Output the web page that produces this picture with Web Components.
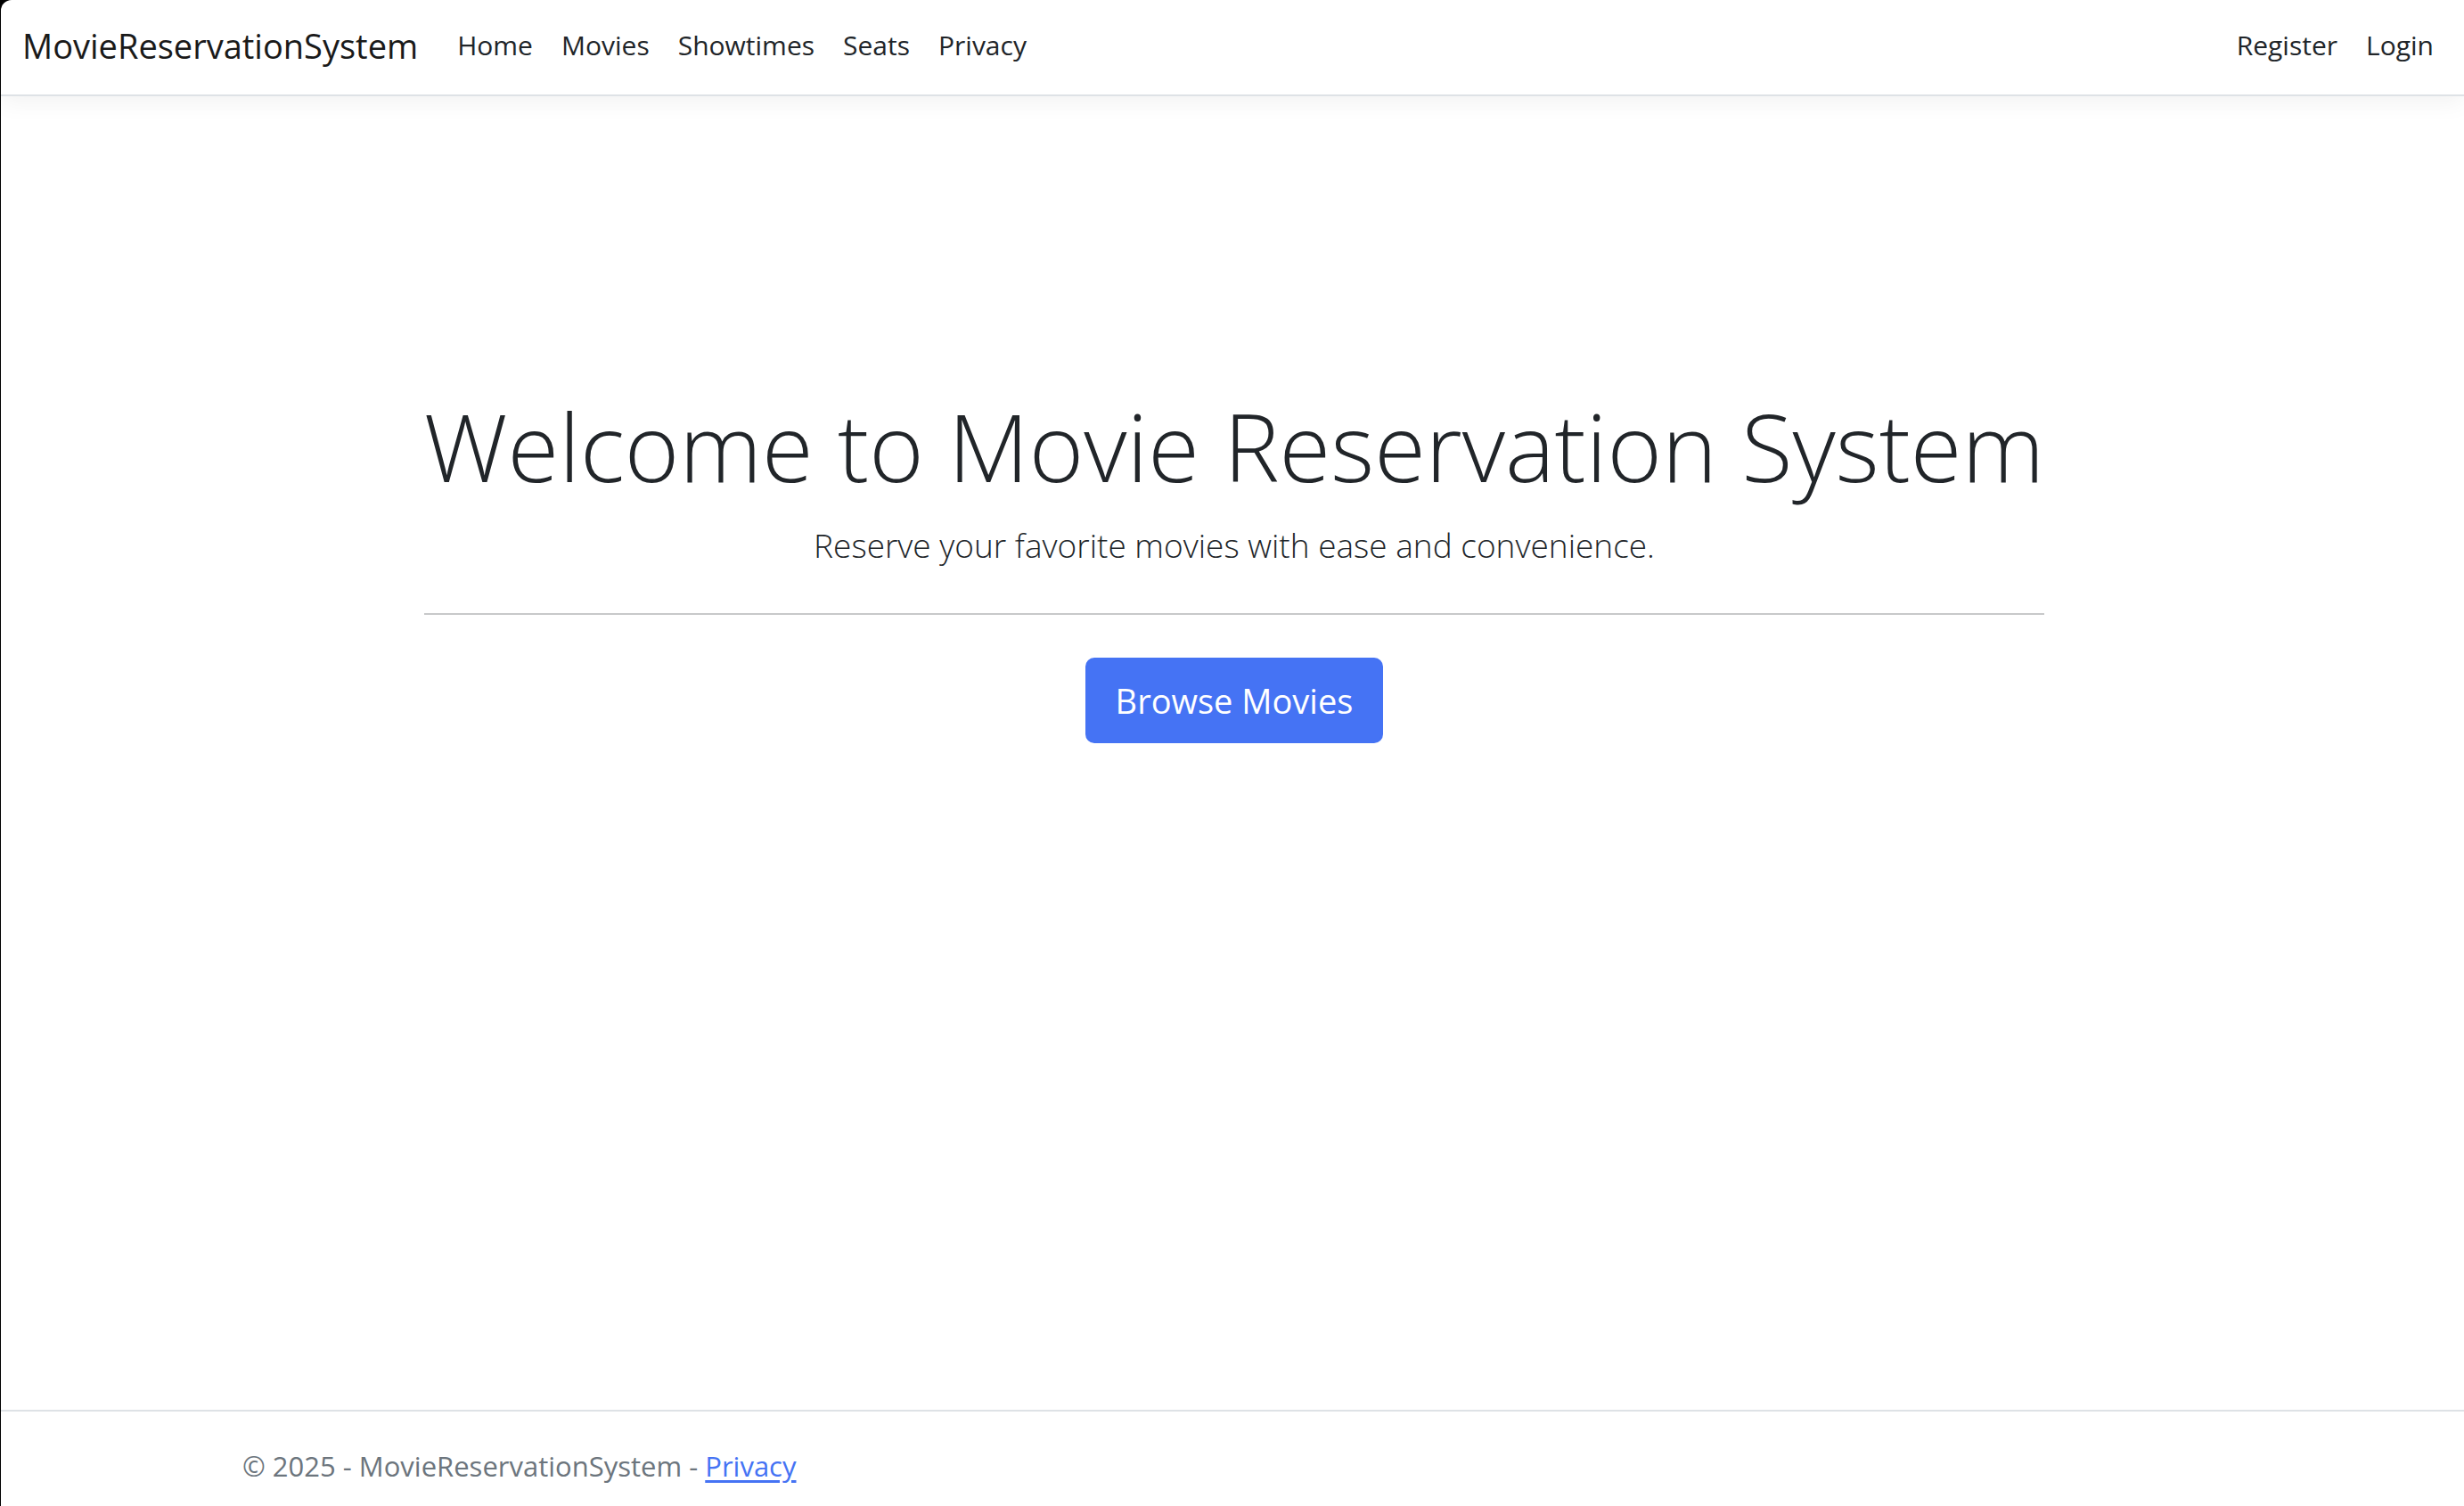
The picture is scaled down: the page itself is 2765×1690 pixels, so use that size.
<!DOCTYPE html>
<html lang="en">
<head>
<meta charset="utf-8">
<title>Home Page - MovieReservationSystem</title>
<style>
  html, body { margin: 0; height: 100%; }
  body {
    background: #000;
    color: #212529;
    font: 400 31px/48px "Segoe UI", "Open Sans", "Noto Sans", sans-serif;
  }
</style>
</head>
<body>
<movie-app>
  <site-navbar slot="header" brand="MovieReservationSystem">
    <nav-link href="#home">Home</nav-link>
    <nav-link href="#movies">Movies</nav-link>
    <nav-link href="#showtimes">Showtimes</nav-link>
    <nav-link href="#seats">Seats</nav-link>
    <nav-link href="#privacy">Privacy</nav-link>
    <nav-link slot="account" href="#register">Register</nav-link>
    <nav-link slot="account" href="#login">Login</nav-link>
  </site-navbar>
  <welcome-hero>
    <span slot="title">Welcome to Movie Reservation System</span>
    <span slot="lead">Reserve your favorite movies with ease and convenience.</span>
    <span slot="action">Browse Movies</span>
  </welcome-hero>
  <site-footer slot="footer">© 2025 - MovieReservationSystem -</site-footer>
</movie-app>
<script>
  const define = (name, html, setup) => {
    const template = document.createElement("template");
    template.innerHTML = html;
    customElements.define(name, class extends HTMLElement {
      constructor() {
        super();
        this.attachShadow({ mode: "open" }).append(template.content.cloneNode(true));
      }
      connectedCallback() {
        if (setup) setup(this, this.shadowRoot);
      }
    });
  };

  define("movie-app", `
    <style>
      :host {
        display: flex;
        flex-direction: column;
        box-sizing: border-box;
        min-height: 100%;
        margin-left: 1px;
        background: #fff;
        border-top-left-radius: 12px;
      }
      main { flex: 1; display: flex; flex-direction: column; }
    </style>
    <slot name="header"></slot>
    <main><slot></slot></main>
    <slot name="footer"></slot>`);

  define("site-navbar", `
    <style>
      :host { display: block; }
      header {
        display: flex;
        align-items: center;
        padding: 27px 18px 31px 24px;
        border-bottom: 2px solid #dee2e6;
        box-shadow: 0 8px 24px rgba(0, 0, 0, .05);
        font-size: 30px;
      }
      .brand {
        margin-right: 28px;
        color: #1a1a1a;
        font-size: 38px;
        text-decoration: none;
      }
      nav { flex: 1; display: flex; justify-content: space-between; }
      div { display: flex; }
    </style>
    <header>
      <a class="brand" href="#home"></a>
      <nav>
        <div><slot></slot></div>
        <div><slot name="account"></slot></div>
      </nav>
    </header>`, (host, root) => {
      root.querySelector(".brand").textContent = host.getAttribute("brand");
    });

  define("nav-link", `
    <style>
      :host { display: block; font-size: 30px; }
      a { display: block; padding: 0 16px; color: #212529; text-decoration: none; }
    </style>
    <a><slot></slot></a>`, (host, root) => {
      root.querySelector("a").href = host.getAttribute("href");
    });

  define("welcome-hero", `
    <style>
      :host {
        display: flex;
        flex-direction: column;
        align-items: center;
        padding: 326px 24px 0 28px;
        text-align: center;
      }
      section { display: flex; flex-direction: column; align-items: center; }
      h1 { margin: 0 0 14px; font-size: 105px; line-height: 134px; font-weight: 300; }
      p { margin: 0; font-size: 37px; line-height: 60px; font-weight: 300; }
      hr {
        align-self: stretch;
        margin: 46px 0 48px;
        border: 0;
        border-top: 2px solid #c8c9ca;
      }
      button {
        padding: 16px 32px;
        border: 2px solid #4573f4;
        border-radius: 10px;
        background: #4573f4;
        color: #fff;
        font: inherit;
        font-size: 38px;
        line-height: 60px;
      }
    </style>
    <section>
      <h1><slot name="title"></slot></h1>
      <p><slot name="lead"></slot></p>
      <hr>
      <button type="button"><slot name="action"></slot></button>
    </section>`);

  define("site-footer", `
    <style>
      :host { display: block; border-top: 2px solid #dee2e6; color: #6c757d; }
      footer {
        box-sizing: border-box;
        max-width: 2270px;
        margin: 0 auto;
        padding: 37px 24px 21px;
      }
      a { color: #4573f4; text-underline-offset: 4px; text-decoration-thickness: 3px; }
    </style>
    <footer><slot></slot> <a href="#privacy">Privacy</a></footer>`);
</script>
</body>
</html>
